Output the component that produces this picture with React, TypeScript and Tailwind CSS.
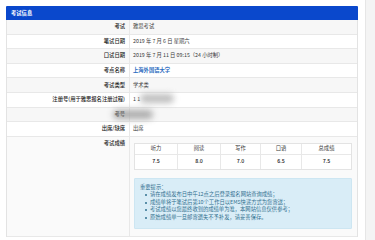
import React from 'react';

const rows = [
  { label: '考试', value: '雅思考试' },
  { label: '笔试日期', value: '2019 年 7 月 6 日 星期六' },
  { label: '口试日期', value: '2019 年 7 月 11 日 09:15（24 小时制）' },
  { label: '考点名称', value: '上海外国语大学', link: true },
  { label: '考试类型', value: '学术类' },
  { label: '注册号(用于雅思报名注册过程)', value: '1 1', blur: true },
  { label: '考号', value: '', blurLabel: true },
  { label: '出席/缺席', value: '出席' },
];

const scores = [
  { name: '听力', value: '7.5' },
  { name: '阅读', value: '8.0' },
  { name: '写作', value: '7.0' },
  { name: '口语', value: '6.5' },
  { name: '总成绩', value: '7.5' },
];

const tips = [
  '请在成绩发布日中午12点之后登录报名网站查询成绩；',
  '成绩单将于笔试后第10个工作日以EMS快递方式为您寄送；',
  '考试成绩以您最终收到的成绩单为准，本网站信息仅供参考；',
  '原始成绩单一旦邮寄遗失不予补发，请妥善保存。',
];

const App = () => {
  return (
    <div
      className="w-[375px] h-[240px] overflow-hidden bg-white flex text-[5.3px] leading-[7px] text-[#3a3a3a]"
      style={{ fontFamily: '"Noto Sans CJK SC", "Noto Sans", sans-serif' }}
    >
      <div className="w-[352px] ml-[6px] mt-[6px] shrink-0">
        <div className="h-[14px] bg-[#0a48cc] flex items-center pl-[5px] text-white font-bold rounded-t-[1px]">
          考试信息
        </div>
        <div className="border-x border-[#e3e3e3]">
          {rows.map((row, i) => (
            <div
              key={i}
              className={`grid grid-cols-[123px_1fr] h-[14.6px] border-b border-[#e8e8e8] ${i % 2 === 0 ? 'bg-[#f7f7f7]' : 'bg-white'}`}
            >
              <div className="relative flex items-center justify-end pr-[4px] border-r border-[#e8e8e8] text-[#222] font-medium">
                {row.label}
                {row.blurLabel && (
                  <div className="absolute right-[-24px] top-[2px] w-[40px] h-[9px] rounded-full bg-[#9a9a9a] blur-[3px] opacity-80" />
                )}
              </div>
              <div className="relative flex items-center pl-[3px]">
                <span className={row.link ? 'text-[#2a6cc0] font-bold' : ''}>{row.value}</span>
                {row.blur && (
                  <div className="absolute left-[10px] top-[1px] w-[34px] h-[9px] rounded-full bg-[#a8a8a8] blur-[3px] opacity-75" />
                )}
              </div>
            </div>
          ))}
          <div className="grid grid-cols-[123px_1fr] h-[100px] bg-[#fafafa] border-b border-[#e8e8e8]">
            <div className="flex justify-end pr-[4px] pt-[3px] border-r border-[#e8e8e8] text-[#222] font-medium">
              考试成绩
            </div>
            <div className="pl-[4px] pr-[5px] pt-[6px]">
              <div className="border border-[#e3e3e3] bg-white">
                <div className="grid grid-cols-[43px_43px_40px_41px_1fr] h-[11px] border-b border-[#e8e8e8]">
                  {scores.map((s, i) => (
                    <div
                      key={i}
                      className={`flex items-center justify-center ${i < 4 ? 'border-r border-[#e8e8e8]' : ''}`}
                    >
                      {s.name}
                    </div>
                  ))}
                </div>
                <div className="grid grid-cols-[43px_43px_40px_41px_1fr] h-[14px]">
                  {scores.map((s, i) => (
                    <div
                      key={i}
                      className={`flex items-center justify-center text-[#222] font-medium ${i < 4 ? 'border-r border-[#e8e8e8]' : ''}`}
                    >
                      {s.value}
                    </div>
                  ))}
                </div>
              </div>
              <div className="mt-[8px] h-[51px] bg-[#d9edf7] border border-[#cde6f2] text-[#31708f] pl-[5px] pt-[5px] leading-[7.5px] rounded-[1px]">
                <div>重要提示：</div>
                <ul className="pl-[5px]">
                  {tips.map((t, i) => (
                    <li key={i} className="flex items-center gap-[3px]">
                      <span className="w-[2px] h-[2px] rounded-full bg-[#31708f] shrink-0" />
                      {t}
                    </li>
                  ))}
                </ul>
              </div>
            </div>
          </div>
        </div>
      </div>
      <div className="ml-[7px] w-[10px] h-[240px] bg-[#f4f4f4] border-l border-[#e6e6e6]" />
    </div>
  );
};

export default App;
